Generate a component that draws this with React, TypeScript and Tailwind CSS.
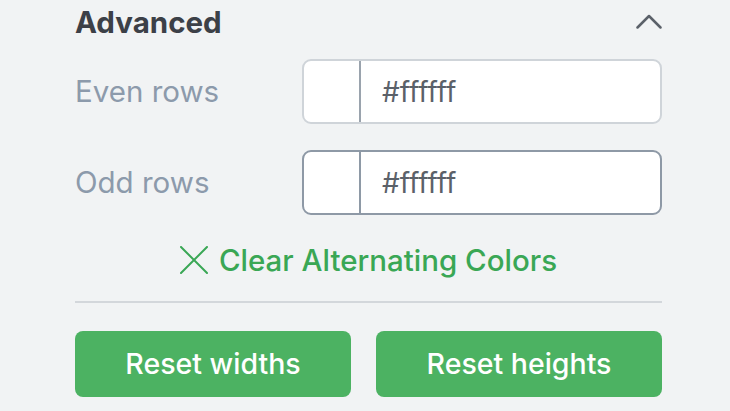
const ColorRow = ({ label, focused }: { label: string; focused?: boolean }) => {
  return (
    <div className="flex items-center justify-between">
      <span className="text-[29.5px] text-[#8c9aab]">{label}</span>
      <div
        className={
          "flex h-[65px] w-[360px] rounded-[9px] border-2 bg-white " +
          (focused ? "border-[#8e99a6]" : "border-[#cfd4d9]")
        }
      >
        <div className={"w-[57px] border-r-2 " + (focused ? "border-[#8e99a6]" : "border-[#9aa3ad]")}></div>
        <div className="flex items-center pl-[21px] text-[28px] text-[#5b6169]">#ffffff</div>
      </div>
    </div>
  );
};

export default function App() {
  return (
    <div
      className="h-[411px] w-[730px] overflow-hidden bg-[#f1f3f4]"
      style={{ fontFamily: "Inter, 'Noto Sans', sans-serif" }}
    >
      <div className="w-[662px] pl-[75px]">
        <div className="flex h-[45px] items-center justify-between">
          <span className="text-[29.5px] font-bold text-[#3c4047]">Advanced</span>
          <svg width="26" height="15" viewBox="0 0 26 15" className="mb-[3px]">
            <polyline points="1.5,13.5 13,2 24.5,13.5" fill="none" stroke="#5b6169" strokeWidth="2.5" strokeLinecap="round" strokeLinejoin="round" />
          </svg>
        </div>

        <div className="mt-[14px] flex flex-col gap-[26px]">
          <ColorRow label="Even rows" />
          <ColorRow label="Odd rows" focused />
        </div>

        <div className="mt-[25px] flex h-[40px] items-center justify-center gap-[11px] text-[#3aa755]">
          <svg width="28" height="28" viewBox="0 0 28 28">
            <path d="M1 1 L27 27 M27 1 L1 27" fill="none" stroke="#3aa755" strokeWidth="2" strokeLinecap="round" />
          </svg>
          <span className="text-[29.5px] font-medium">Clear Alternating Colors</span>
        </div>

        <div className="mt-[21px] h-[2px] bg-[#d3d7db]"></div>

        <div className="mt-[28px] flex gap-[25px]">
          <button className="h-[66px] w-[276px] rounded-[8px] bg-[#4cb262] text-[28.5px] font-medium text-white">
            Reset widths
          </button>
          <button className="h-[66px] w-[286px] rounded-[8px] bg-[#4cb262] text-[28.5px] font-medium text-white">
            Reset heights
          </button>
        </div>
      </div>
    </div>
  );
}
